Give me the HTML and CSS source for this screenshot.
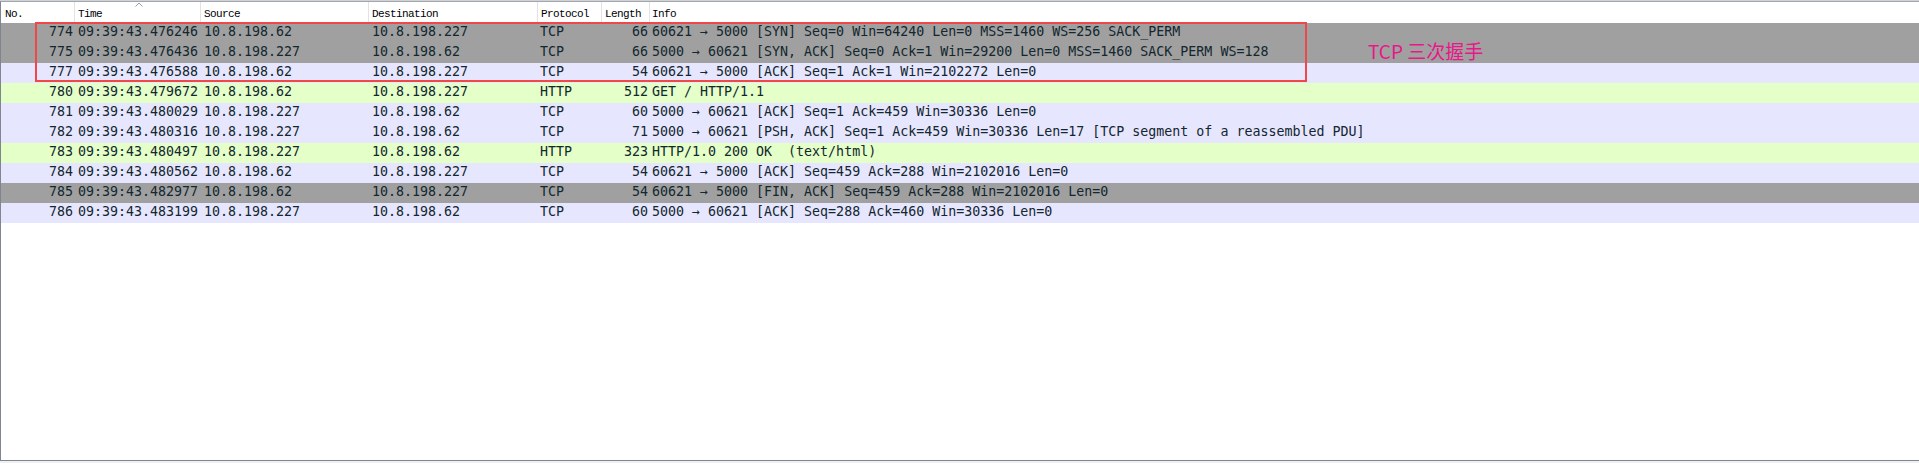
FILE: index.html
```html
<!DOCTYPE html>
<html lang="zh-CN">
<head>
<meta charset="utf-8">
<title>Packet list</title>
<link rel="stylesheet" href="styles.css">
</head>
<body>
<div class="window">
  <div class="table">
    <div class="head">
      <div class="hc">No.</div>
      <div class="hc sorted">Time<svg class="sort" width="8" height="5" viewBox="0 0 8 5"><polyline points="0.5,4.5 4,1 7.5,4.5" fill="none" stroke="#9a9a9a" stroke-width="1"/></svg></div>
      <div class="hc">Source</div>
      <div class="hc">Destination</div>
      <div class="hc">Protocol</div>
      <div class="hc">Length</div>
      <div class="hc last">Info</div>
    </div>
    <div class="rows">
      <div class="row syn"><span class="num">774</span><span>09:39:43.476246</span><span>10.8.198.62</span><span>10.8.198.227</span><span class="proto">TCP</span><span class="num len">66</span><span class="info">60621 → 5000 [SYN] Seq=0 Win=64240 Len=0 MSS=1460 WS=256 SACK_PERM</span></div>
      <div class="row syn"><span class="num">775</span><span>09:39:43.476436</span><span>10.8.198.227</span><span>10.8.198.62</span><span class="proto">TCP</span><span class="num len">66</span><span class="info">5000 → 60621 [SYN, ACK] Seq=0 Ack=1 Win=29200 Len=0 MSS=1460 SACK_PERM WS=128</span></div>
      <div class="row tcp"><span class="num">777</span><span>09:39:43.476588</span><span>10.8.198.62</span><span>10.8.198.227</span><span class="proto">TCP</span><span class="num len">54</span><span class="info">60621 → 5000 [ACK] Seq=1 Ack=1 Win=2102272 Len=0</span></div>
      <div class="row http"><span class="num">780</span><span>09:39:43.479672</span><span>10.8.198.62</span><span>10.8.198.227</span><span class="proto">HTTP</span><span class="num len">512</span><span class="info">GET / HTTP/1.1</span></div>
      <div class="row tcp"><span class="num">781</span><span>09:39:43.480029</span><span>10.8.198.227</span><span>10.8.198.62</span><span class="proto">TCP</span><span class="num len">60</span><span class="info">5000 → 60621 [ACK] Seq=1 Ack=459 Win=30336 Len=0</span></div>
      <div class="row tcp"><span class="num">782</span><span>09:39:43.480316</span><span>10.8.198.227</span><span>10.8.198.62</span><span class="proto">TCP</span><span class="num len">71</span><span class="info">5000 → 60621 [PSH, ACK] Seq=1 Ack=459 Win=30336 Len=17 [TCP segment of a reassembled PDU]</span></div>
      <div class="row http"><span class="num">783</span><span>09:39:43.480497</span><span>10.8.198.227</span><span>10.8.198.62</span><span class="proto">HTTP</span><span class="num len">323</span><span class="info">HTTP/1.0 200 OK  (text/html)</span></div>
      <div class="row tcp"><span class="num">784</span><span>09:39:43.480562</span><span>10.8.198.62</span><span>10.8.198.227</span><span class="proto">TCP</span><span class="num len">54</span><span class="info">60621 → 5000 [ACK] Seq=459 Ack=288 Win=2102016 Len=0</span></div>
      <div class="row syn"><span class="num">785</span><span>09:39:43.482977</span><span>10.8.198.62</span><span>10.8.198.227</span><span class="proto">TCP</span><span class="num len">54</span><span class="info">60621 → 5000 [FIN, ACK] Seq=459 Ack=288 Win=2102016 Len=0</span></div>
      <div class="row tcp"><span class="num">786</span><span>09:39:43.483199</span><span>10.8.198.227</span><span>10.8.198.62</span><span class="proto">TCP</span><span class="num len">60</span><span class="info">5000 → 60621 [ACK] Seq=288 Ack=460 Win=30336 Len=0</span></div>
    </div>
    <div class="mark"></div>
    <div class="note">TCP 三次握手</div>
  </div>
</div>
</body>
</html>
```

FILE: styles.css
```css
html, body {
  margin: 0;
  padding: 0;
}
body {
  background: #eef0f2;
  width: 1919px;
  height: 463px;
  overflow: hidden;
}
.window {
  border-top: 1px solid #cfd2d6;
}
.table {
  position: relative;
  box-sizing: border-box;
  height: 460px;
  background: #ffffff;
  border-top: 1px solid #a3a7ac;
  border-left: 1px solid #80868f;
  border-bottom: 1px solid #80868f;
}
.head,
.row {
  display: grid;
  grid-template-columns: 74px 126px 168px 169px 64px 48px 1fr;
}
.head {
  height: 21px;
  font-family: "Liberation Mono", monospace;
  font-size: 11px;
  letter-spacing: -0.6px;
  color: #000;
}
.hc {
  position: relative;
  box-sizing: border-box;
  padding: 3px 0 0 3px;
  line-height: 18px;
  border-right: 1px solid #e3e3e3;
  white-space: nowrap;
}
.hc:first-child {
  padding-left: 4px;
}
.hc.last {
  border-right: none;
  padding-left: 2px;
}
.sort {
  position: absolute;
  left: 60px;
  top: 0;
}
.rows {
  font-family: "DejaVu Sans Mono", monospace;
  font-size: 13.3px;
  color: #12272e;
}
.row {
  height: 20px;
  line-height: 18px;
  white-space: pre;
}
.row span {
  padding-left: 3px;
  overflow: visible;
}
.row .num {
  text-align: right;
  padding-left: 0;
  padding-right: 2px;
}
.row .proto {
  padding-left: 2px;
}
.row .info {
  padding-left: 2px;
}
.syn {
  background: #a0a0a0;
}
.tcp {
  background: #e7e6ff;
}
.http {
  background: #e4ffc7;
}
.mark {
  position: absolute;
  left: 34px;
  top: 20px;
  width: 1272px;
  height: 60px;
  box-sizing: border-box;
  border: 2px solid #f04848;
}
.note {
  position: absolute;
  left: 1367px;
  top: 39px;
  font-family: "Noto Sans CJK SC", "Liberation Sans", sans-serif;
  font-size: 19px;
  line-height: 1;
  color: #e8178a;
  white-space: pre;
}
```
